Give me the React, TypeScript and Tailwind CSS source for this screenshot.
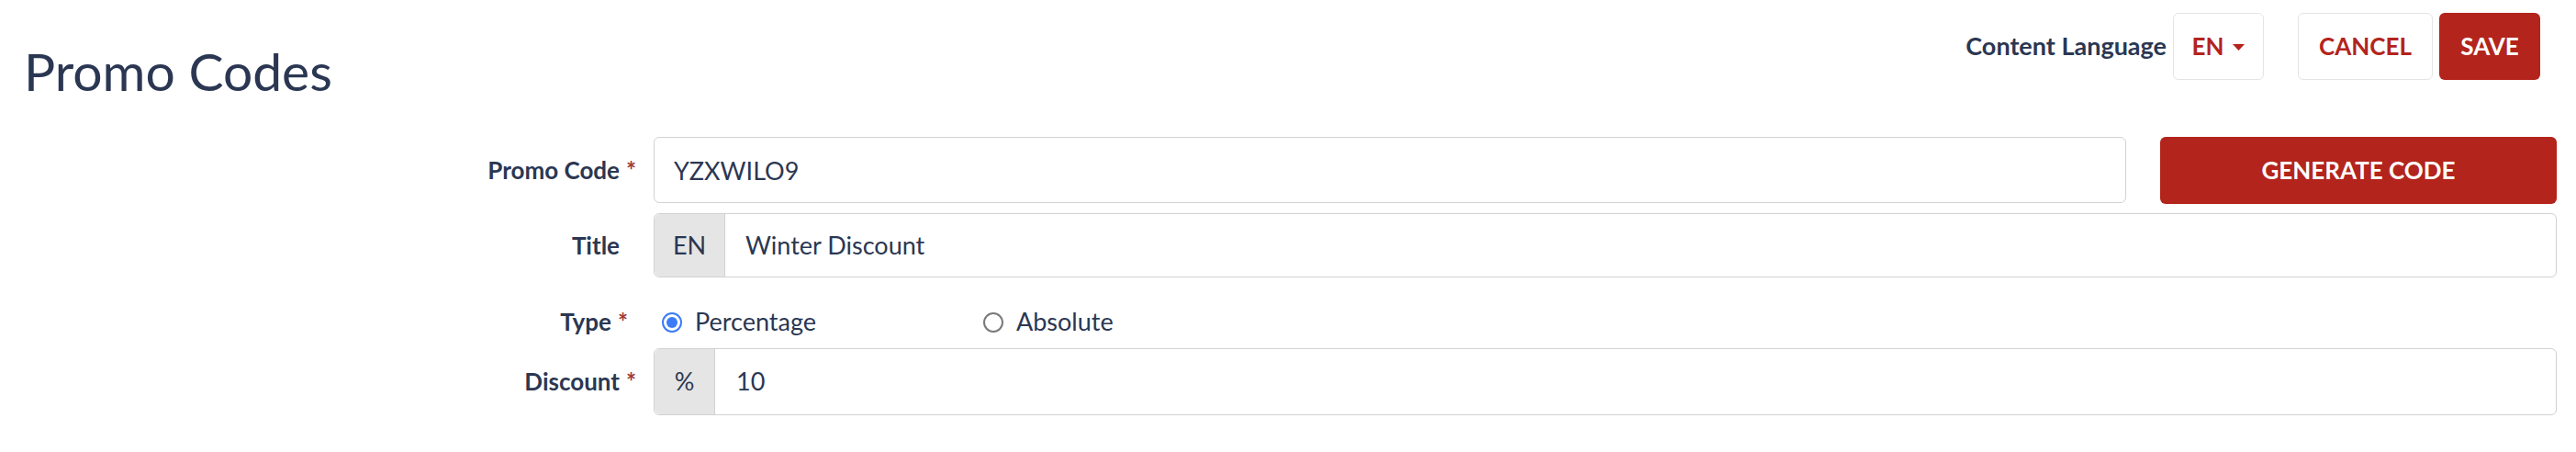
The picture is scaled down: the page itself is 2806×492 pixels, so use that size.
import React from "react";

function Caret() {
  return (
    <svg width="13" height="7" viewBox="0 0 13 7" className="mt-[2px]">
      <polygon points="0,0 13,0 6.5,7" fill="#b3241c" />
    </svg>
  );
}

function Label({ text, required, pr = "pr-[37px]" }: { text: string; required?: boolean; pr?: string }) {
  return (
    <div className={`w-[712px] shrink-0 text-right ${pr}`}>
      <span className="relative text-[26px] font-bold">
        {text}
        {required && <span className="absolute left-full ml-[7px] top-[-3px] text-[#a23a33]">*</span>}
      </span>
    </div>
  );
}

function Radio({ checked, label }: { checked?: boolean; label: string }) {
  return (
    <label className="flex items-center gap-[14px]">
      {checked ? (
        <span className="flex h-[22px] w-[22px] items-center justify-center rounded-full border-[2px] border-[#3b7cf6]">
          <span className="h-[12px] w-[12px] rounded-full bg-[#3b7cf6]" />
        </span>
      ) : (
        <span className="h-[22px] w-[22px] rounded-full border-[2px] border-[#7a7a7a]" />
      )}
      <span className="text-[27px]">{label}</span>
    </label>
  );
}

export default function App() {
  return (
    <div className="min-h-screen w-full bg-white font-['Lato','Noto_Sans',sans-serif] text-[#2b3752]">
      {/* Header */}
      <div className="flex h-[149px] items-start justify-between pl-[26px] pr-[39px] pt-[14px]">
        <h1 className="mt-[35px] text-[57px] font-normal leading-none">Promo Codes</h1>
        <div className="flex items-center">
          <span className="mr-[7px] text-[27px] font-bold">Content Language</span>
          <button className="flex h-[73px] w-[99px] items-center justify-center gap-[10px] rounded-md border border-[#e4e4e4] text-[26px] font-bold text-[#b3241c]">
            EN <Caret />
          </button>
          <button className="ml-[37px] h-[73px] w-[147px] rounded-md border border-[#e4e4e4] text-[26px] font-bold text-[#b3241c]">
            CANCEL
          </button>
          <button className="ml-[7px] h-[73px] w-[110px] rounded-md bg-[#b3241c] text-[26px] font-bold text-white">
            SAVE
          </button>
        </div>
      </div>

      {/* Form */}
      <div className="flex flex-col pr-[21px]">
        <div className="flex h-[72px] items-center">
          <Label text="Promo Code" required />
          <input
            defaultValue="YZXWILO9"
            className="h-full min-w-0 flex-1 rounded-md border border-[#d2d2d2] px-[21px] text-[27px] outline-none"
          />
          <button className="ml-[37px] h-[73px] w-[432px] rounded-md bg-[#b3241c] text-[26px] font-bold text-white">
            GENERATE CODE
          </button>
        </div>

        <div className="mt-[11px] flex h-[70px] items-center">
          <Label text="Title" />
          <div className="flex h-full flex-1 rounded-md border border-[#d2d2d2]">
            <span className="flex w-[77px] items-center justify-center rounded-l-md border-r border-[#d2d2d2] bg-[#e5e5e5] text-[27px]">
              EN
            </span>
            <input
              defaultValue="Winter Discount"
              className="min-w-0 flex-1 rounded-r-md px-[22px] text-[27px] outline-none"
            />
          </div>
        </div>

        <div className="flex h-[77px] items-center pt-[20px]">
          <Label text="Type" required pr="pr-[46px]" />
          <div className="ml-[9px] flex items-center">
            <div className="w-[350px]">
              <Radio checked label="Percentage" />
            </div>
            <Radio label="Absolute" />
          </div>
        </div>

        <div className="flex h-[73px] items-center">
          <Label text="Discount" required />
          <div className="flex h-full flex-1 rounded-md border border-[#d2d2d2]">
            <span className="flex w-[66px] items-center justify-center rounded-l-md border-r border-[#d2d2d2] bg-[#e5e5e5] text-[27px]">
              %
            </span>
            <input
              defaultValue="10"
              className="min-w-0 flex-1 rounded-r-md px-[23px] text-[27px] outline-none"
            />
          </div>
        </div>
      </div>
    </div>
  );
}
